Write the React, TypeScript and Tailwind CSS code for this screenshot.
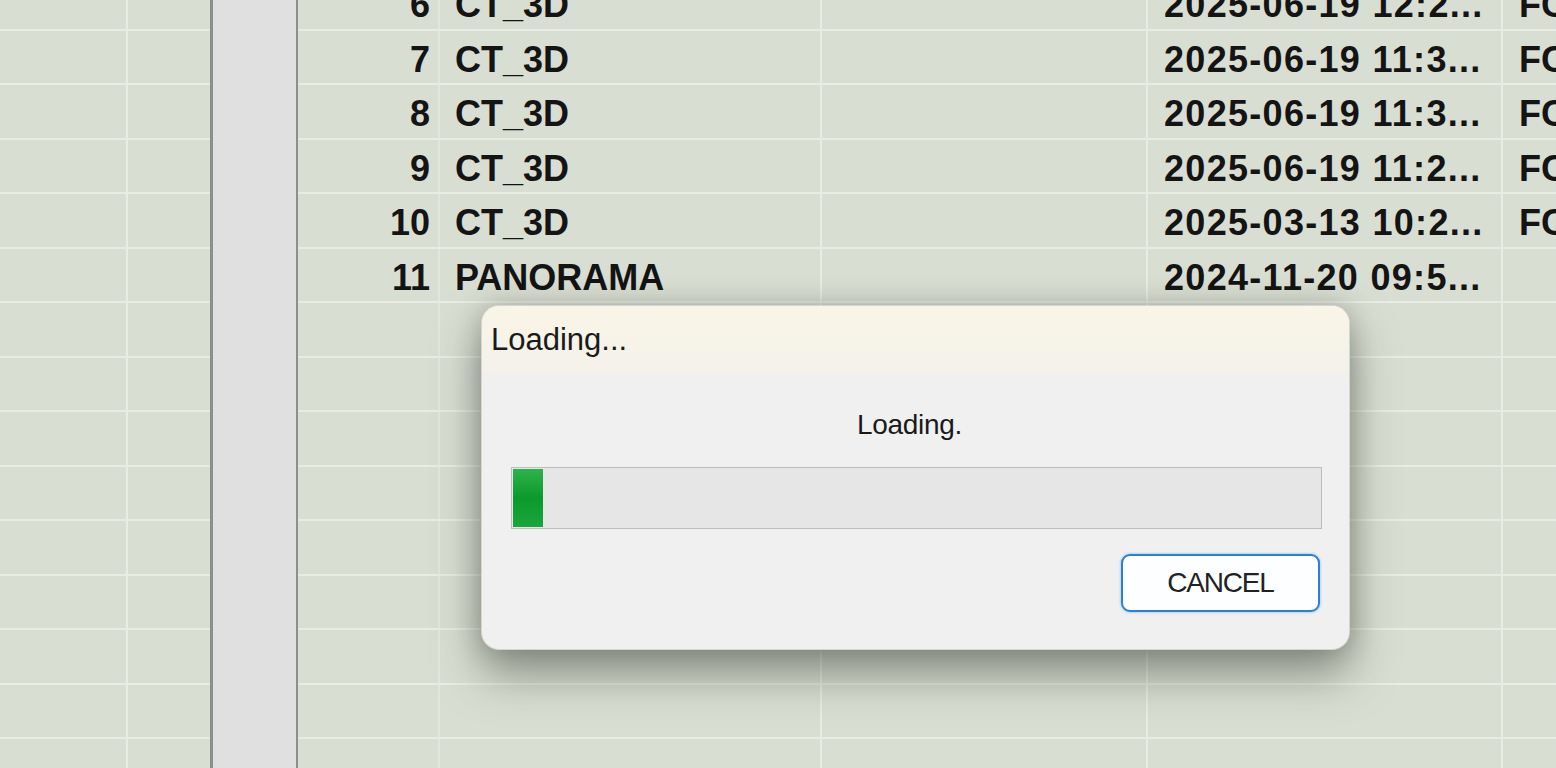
import React from "react";

const rows = [
  { n: 6, name: "CT_3D", date: "2025-06-19 12:2...", x: "FC" },
  { n: 7, name: "CT_3D", date: "2025-06-19 11:3...", x: "FC" },
  { n: 8, name: "CT_3D", date: "2025-06-19 11:3...", x: "FC" },
  { n: 9, name: "CT_3D", date: "2025-06-19 11:2...", x: "FC" },
  { n: 10, name: "CT_3D", date: "2025-03-13 10:2...", x: "FC" },
  { n: 11, name: "PANORAMA", date: "2024-11-20 09:5...", x: "" },
];

const TOTAL = 15;

function LeftPane() {
  return (
    <div className="w-[210px] shrink-0 overflow-hidden bg-[#d9ded2]">
      <div className="-mt-[24px] flex flex-col">
        {Array.from({ length: TOTAL }).map((_, i) => (
          <div key={i} className="flex h-[54.5px] border-b-2 border-[#e8ece2] pr-[6px]">
            <div className="w-[128px] border-r-2 border-[#e8ece2]" />
            <div className="flex-1" />
          </div>
        ))}
      </div>
    </div>
  );
}

function FileTable() {
  return (
    <div className="min-w-0 flex-1 overflow-hidden bg-[#d9ded2] font-['Liberation_Sans',Arial,sans-serif] text-[36px] font-bold text-[#141414]">
      <div className="-mt-[24px] flex flex-col">
        {Array.from({ length: TOTAL }).map((_, i) => {
          const r = rows[i];
          return (
            <div key={i} className="flex h-[54.5px] border-b-2 border-[#e8ece2] leading-none">
              <div className="flex h-full w-[142px] shrink-0 items-center justify-end border-r-2 border-[#e2e6dc] pr-[8px] pt-[6px]">
                {r ? r.n : ""}
              </div>
              <div className="flex h-full w-[382px] shrink-0 items-center border-r-2 border-[#e8ece2] pl-[15px] pt-[6px]">
                {r ? r.name : ""}
              </div>
              <div className="h-full w-[326px] shrink-0 border-r-2 border-[#e8ece2]" />
              <div className="flex h-full w-[355px] shrink-0 items-center whitespace-nowrap border-r-2 border-[#e8ece2] pl-[16px] pt-[6px] tracking-[1.3px]">
                {r ? r.date : ""}
              </div>
              <div className="flex h-full min-w-0 flex-1 items-center overflow-hidden whitespace-nowrap pl-[16px] pt-[6px]">
                {r ? r.x : ""}
              </div>
            </div>
          );
        })}
      </div>
    </div>
  );
}

function LoadingDialog() {
  return (
    <div className="absolute left-[481px] top-[305px] flex h-[345px] w-[869px] flex-col overflow-hidden rounded-[18px] border border-[#d6d6d0] bg-[#f0f0f0] font-['Liberation_Sans',Arial,sans-serif] text-[#1a1a1a] shadow-[0_24px_45px_rgba(60,65,55,0.5),0_0_24px_rgba(60,65,55,0.25)]">
      {/* Title */}
      <div className="flex h-[68px] items-center bg-gradient-to-b from-[#f9f5e6] to-[#f3f1ea] pl-[9px] text-[31px] tracking-[0px]">
        Loading...
      </div>

      {/* Body */}
      <div className="flex flex-1 flex-col pl-[29px] pr-[27px]">
        <div className="flex h-[93px] items-center justify-center pr-[14px] pt-[8px] text-[28px] tracking-[-0.3px]">
          Loading.
        </div>
        <div className="flex h-[62px] border border-[#bdbdbd] bg-[#e6e6e6] p-px">
          <div className="w-[30px] bg-gradient-to-b from-[#2bb34a] via-[#0a9a2a] to-[#1aa63a]" />
        </div>
        <div className="flex justify-end pr-[2px] pt-[25px]">
          <button className="flex h-[58px] w-[199px] items-center justify-center rounded-[9px] border-2 border-[#2d7fd0] bg-[#fdfeff] text-[28px] tracking-[-1.2px] text-[#222] shadow-[0_0_3px_rgba(80,170,240,0.7)]">
            CANCEL
          </button>
        </div>
      </div>
    </div>
  );
}

export default function App() {
  return (
    <div className="relative flex h-[768px] w-[1556px] overflow-hidden bg-[#d9ded2]">
      <LeftPane />
      <div className="w-[3px] shrink-0 bg-[#8d908a]" />
      <div className="w-[83px] shrink-0 bg-[#e0e0e0]" />
      <div className="w-[2px] shrink-0 bg-[#8d908a]" />
      <FileTable />
      <LoadingDialog />
    </div>
  );
}
